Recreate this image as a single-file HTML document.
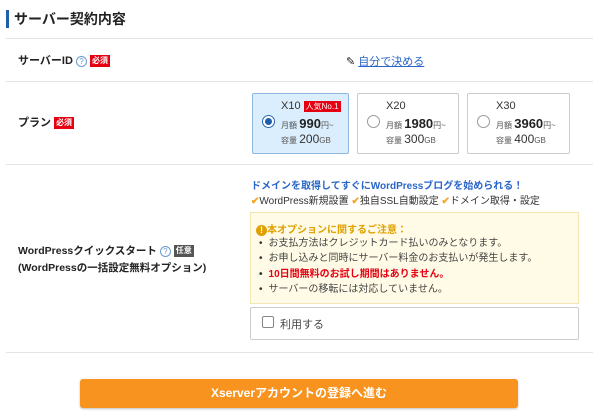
<!DOCTYPE html>
<html><head><meta charset="utf-8"><style>
*{margin:0;padding:0;box-sizing:border-box}
body{width:600px;height:418px;background:#fff;font-family:"Liberation Sans","Noto Sans CJK JP",sans-serif;color:#333;position:relative;overflow:hidden}
.a{position:absolute;white-space:nowrap}
.line{position:absolute;left:6px;width:587px;height:1px;background:#e3e3e3}
.req{display:inline-block;background:#e60012;color:#fff;font-size:8px;padding:1px 2px;vertical-align:middle;line-height:10px}
.q{display:inline-block;width:11px;height:11px;border:1px solid #6b9bd0;border-radius:50%;color:#6b9bd0;font-size:8px;text-align:center;line-height:9px;vertical-align:middle;font-weight:normal}
.box{position:absolute;top:93px;height:61px;border:1px solid #ccc;background:#fff;border-radius:2px}
.box.sel{background:#dbeefd;border-color:#8fb8e0}
.radio{position:absolute;left:9px;top:21px;width:13px;height:13px;border:1px solid #999;border-radius:50%;background:#fff}
.sel .radio{border-color:#2867b2}
.sel .radio:after{content:"";position:absolute;left:2px;top:2px;width:7px;height:7px;border-radius:50%;background:#1f5ea8}
.nm{position:absolute;left:28px;top:6px;font-size:11px}
.pr{position:absolute;left:28px;top:22px;font-size:8px;color:#555}
.pr b{font-size:13px;color:#222}
.cp{position:absolute;left:28px;top:38px;font-size:8px;color:#555}
.cp span{font-size:12px;color:#333}
.ck{color:#f5a623;font-weight:bold}
ul{list-style:none}
li{font-size:10px;line-height:15.3px;color:#444}
li:before{content:"•";margin-right:6px;color:#333}
</style></head><body>
<div class="a" style="left:6px;top:10px;width:3px;height:18px;background:#1f5ea8"></div>
<div class="a" style="left:14px;top:9px;font-size:14px;font-weight:bold;color:#222">サーバー契約内容</div>
<div class="line" style="top:38px"></div>
<div class="a" style="left:18px;top:52px;font-size:11px;font-weight:bold;color:#222">サーバーID <span class="q">?</span> <span class="req">必須</span></div>
<div class="a" style="left:346px;top:53px;font-size:11px;color:#2a66c9"><span style="color:#222">✎</span> <span style="text-decoration:underline">自分で決める</span></div>
<div class="line" style="top:81px"></div>
<div class="a" style="left:18px;top:114px;font-size:11px;font-weight:bold;color:#222">プラン <span class="req">必須</span></div>
<div class="box sel" style="left:252px;width:97px"><div class="radio"></div><div class="nm">X10 <span style="background:#e60012;color:#fff;font-size:8px;padding:1px 2px">人気No.1</span></div><div class="pr">月額 <b>990</b>円~</div><div class="cp">容量 <span>200</span>GB</div></div>
<div class="box" style="left:357px;width:102px"><div class="radio"></div><div class="nm">X20</div><div class="pr">月額 <b>1980</b>円~</div><div class="cp">容量 <span>300</span>GB</div></div>
<div class="box" style="left:467px;width:103px"><div class="radio"></div><div class="nm">X30</div><div class="pr">月額 <b>3960</b>円~</div><div class="cp">容量 <span>400</span>GB</div></div>
<div class="line" style="top:164px"></div>
<div class="a" style="left:251px;top:177px;font-size:10px;font-weight:bold;color:#2a66c9">ドメインを取得してすぐにWordPressブログを始められる！</div>
<div class="a" style="left:251px;top:192px;font-size:10px;color:#333"><span class="ck">✔</span>WordPress新規設置 <span class="ck">✔</span>独自SSL自動設定 <span class="ck">✔</span>ドメイン取得・設定</div>
<div class="a" style="left:250px;top:212px;width:329px;height:92px;background:#fffbe6;border:1px solid #f3e6b5"></div>
<div class="a" style="left:256px;top:221px;font-size:10px;font-weight:bold;color:#e0a100"><span style="display:inline-block;width:11px;height:11px;border-radius:50%;background:#e0a100;color:#fff;text-align:center;font-size:9px;line-height:11px">!</span>本オプションに関するご注意：</div>
<ul class="a" style="left:259px;top:236px">
<li>お支払方法はクレジットカード払いのみとなります。</li>
<li>お申し込みと同時にサーバー料金のお支払いが発生します。</li>
<li style="color:#e60012;font-weight:bold">10日間無料のお試し期間はありません。</li>
<li>サーバーの移転には対応していません。</li>
</ul>
<div class="a" style="left:250px;top:307px;width:329px;height:33px;border:1px solid #ccc;border-radius:2px"></div>
<div class="a" style="left:262px;top:316px;width:12px;height:12px;border:1px solid #888;border-radius:2px;background:#fff"></div>
<div class="a" style="left:280px;top:316px;font-size:11px;color:#444">利用する</div>
<div class="a" style="left:18px;top:243px;font-size:10.5px;font-weight:bold;color:#222;line-height:17px">WordPressクイックスタート <span class="q">?</span> <span class="req" style="background:#555">任意</span><br>(WordPressの一括設定無料オプション)</div>
<div class="line" style="top:352px"></div>
<div class="a" style="left:80px;top:379px;width:438px;height:29px;background:#f7931e;border-radius:3px;box-shadow:0 1px 2px rgba(0,0,0,.25);color:#fff;font-weight:bold;font-size:12px;text-align:center;line-height:29px">Xserverアカウントの登録へ進む</div>
</body></html>
